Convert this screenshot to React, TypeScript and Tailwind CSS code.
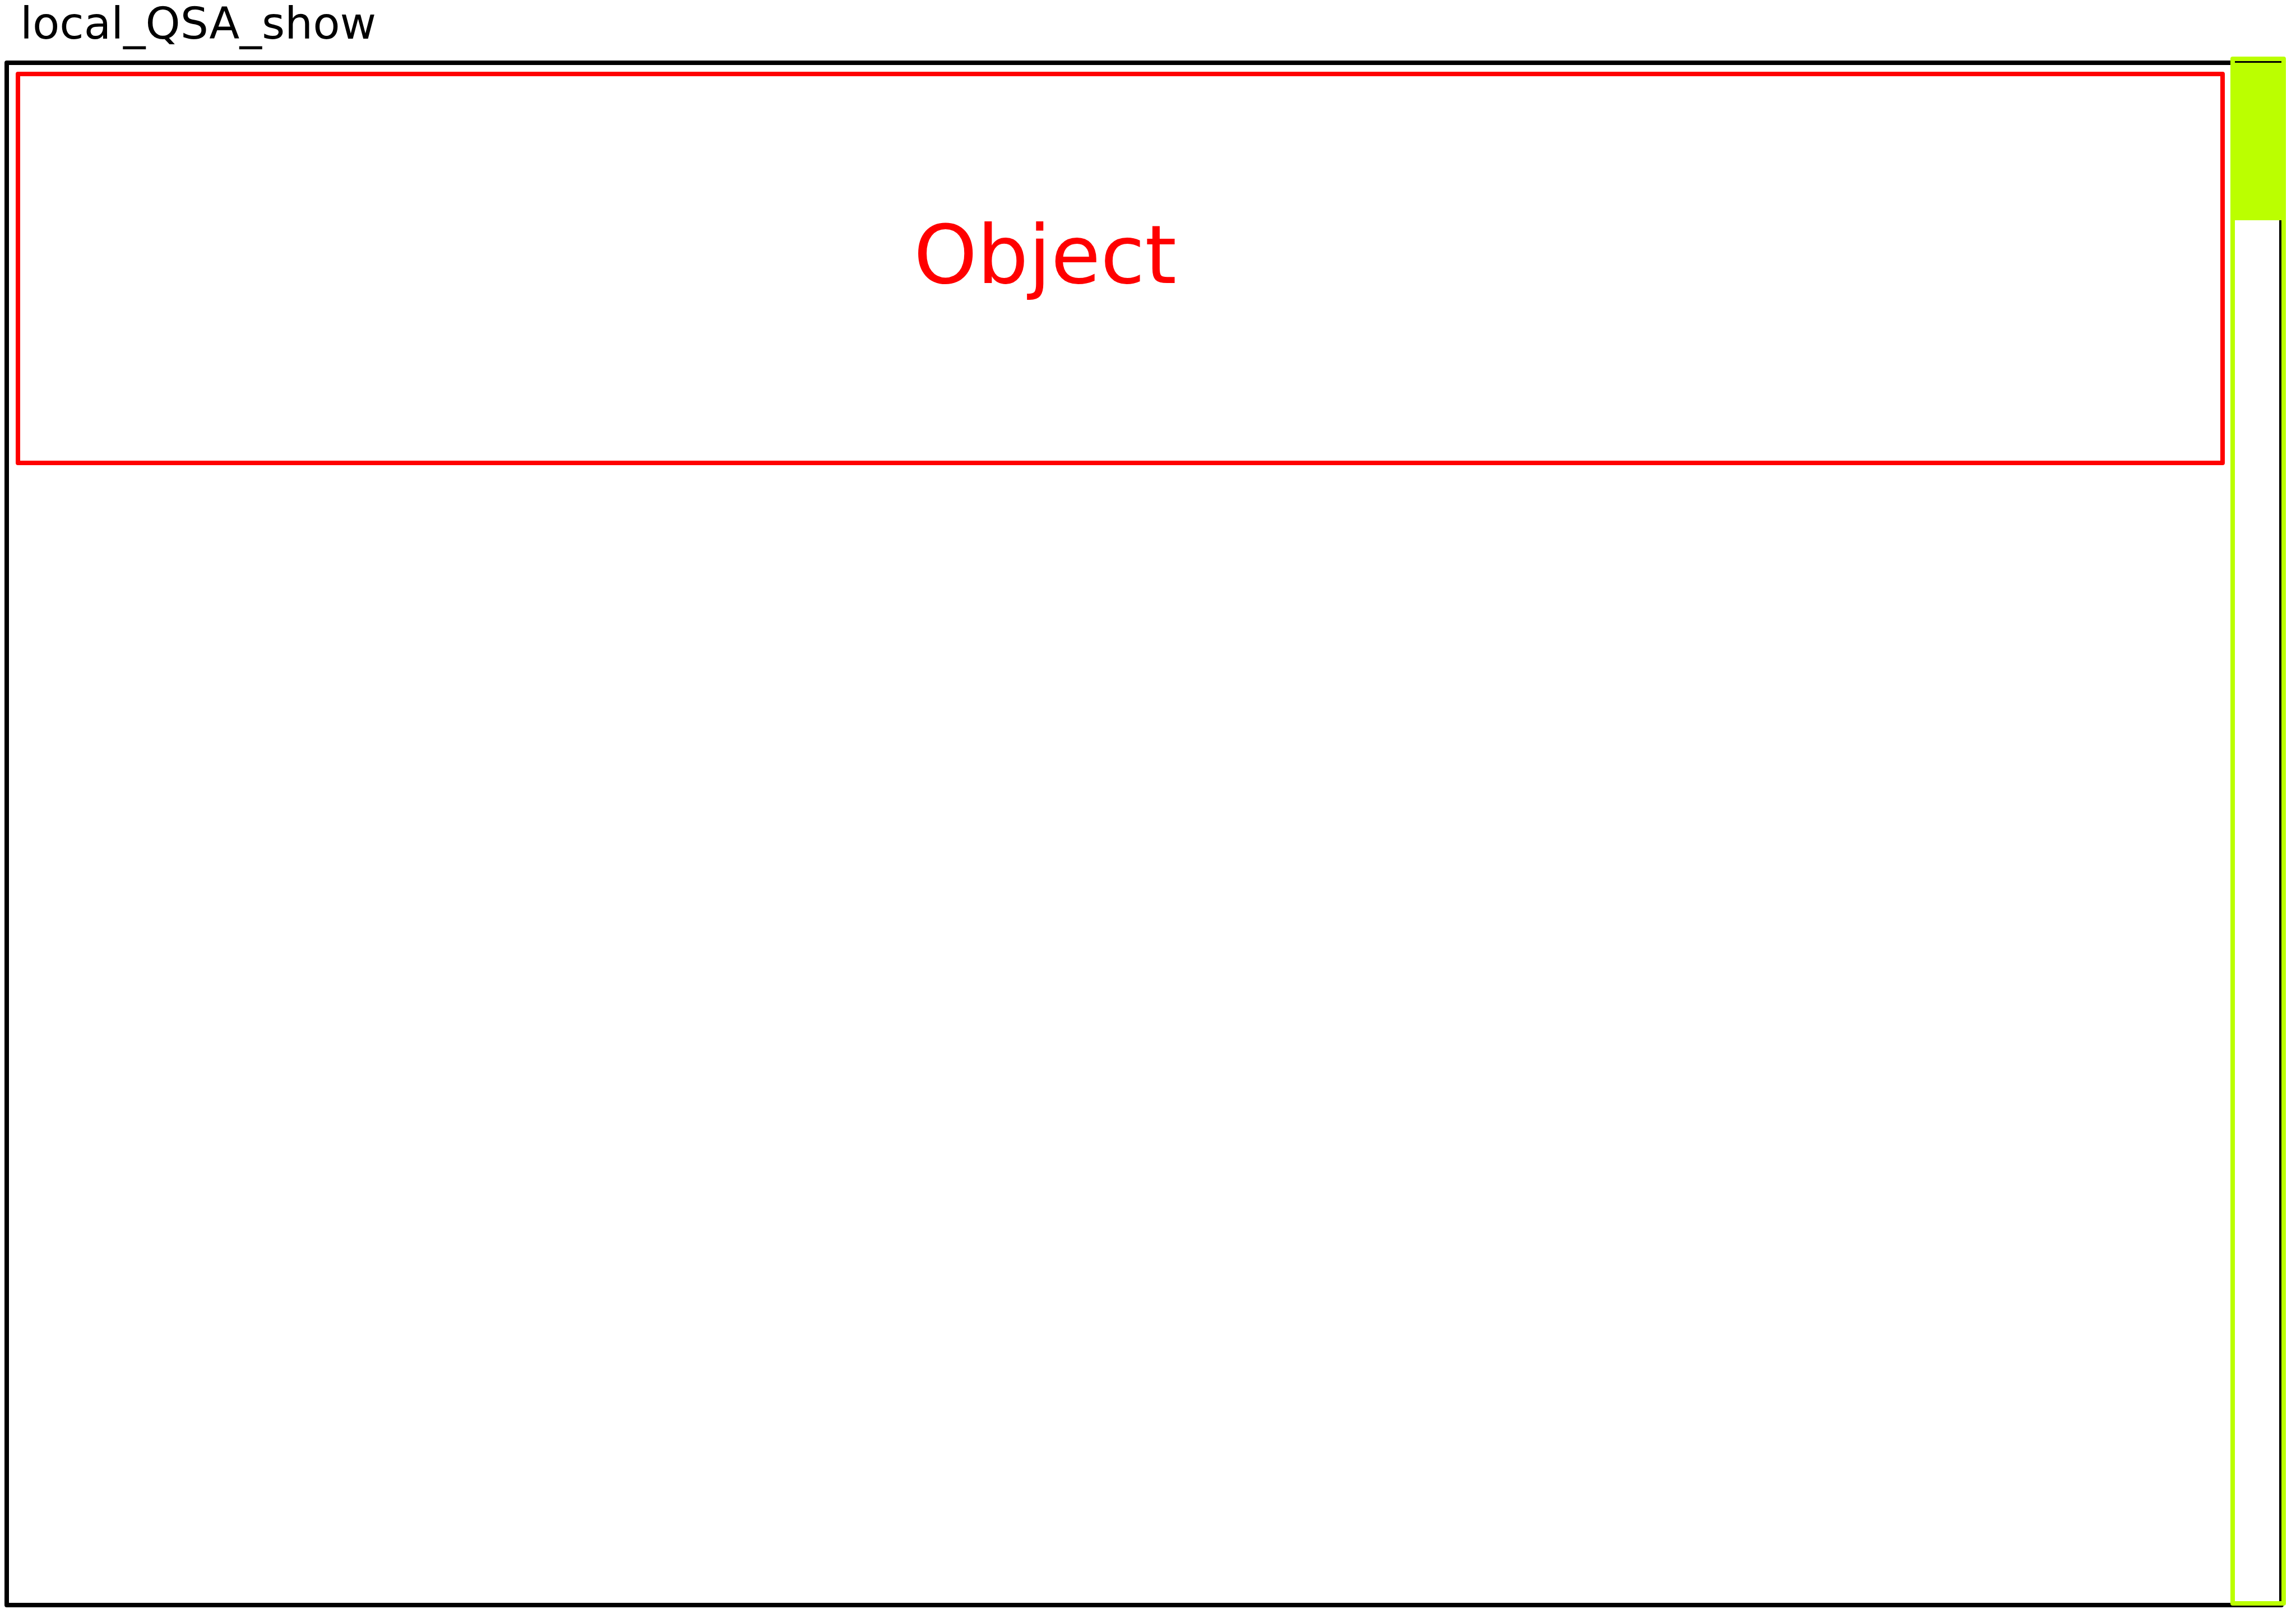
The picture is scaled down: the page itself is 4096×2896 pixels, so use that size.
function ScrollRail() {
  return (
    <div className="absolute -top-[15px] -right-3 -bottom-[5px] w-[99px] rounded-sm border-8 border-[#bbff00] pt-[3px]">
      <div
        role="scrollbar"
        aria-label="Scroll objects"
        aria-controls="object-list"
        aria-orientation="vertical"
        aria-valuemin={0}
        aria-valuemax={100}
        aria-valuenow={0}
        tabIndex={0}
        className="h-[281px] w-full bg-[#bbff00]"
      />
    </div>
  );
}

function ObjectCard({ label }: { label: string }) {
  return (
    <section className="flex h-[702px] items-center justify-center rounded-sm border-8 border-[#ff0000] pr-[268px] pb-12">
      <h2 className="text-[144px] leading-none text-[#ff0000]">{label}</h2>
    </section>
  );
}

export default function App() {
  return (
    <div className="flex h-screen w-full flex-col bg-white pr-[22px] pb-7 pl-2 font-['DejaVu_Sans',sans-serif]">
      <header className="flex h-[108px] shrink-0 items-center pb-6 pl-7">
        <h1 className="text-[79px] leading-none text-black">local_QSA_show</h1>
      </header>
      <main className="relative flex-1 rounded-sm border-8 border-black pt-3 pr-[97px] pl-3">
        <div id="object-list">
          <ObjectCard label="Object" />
        </div>
        <ScrollRail />
      </main>
    </div>
  );
}
